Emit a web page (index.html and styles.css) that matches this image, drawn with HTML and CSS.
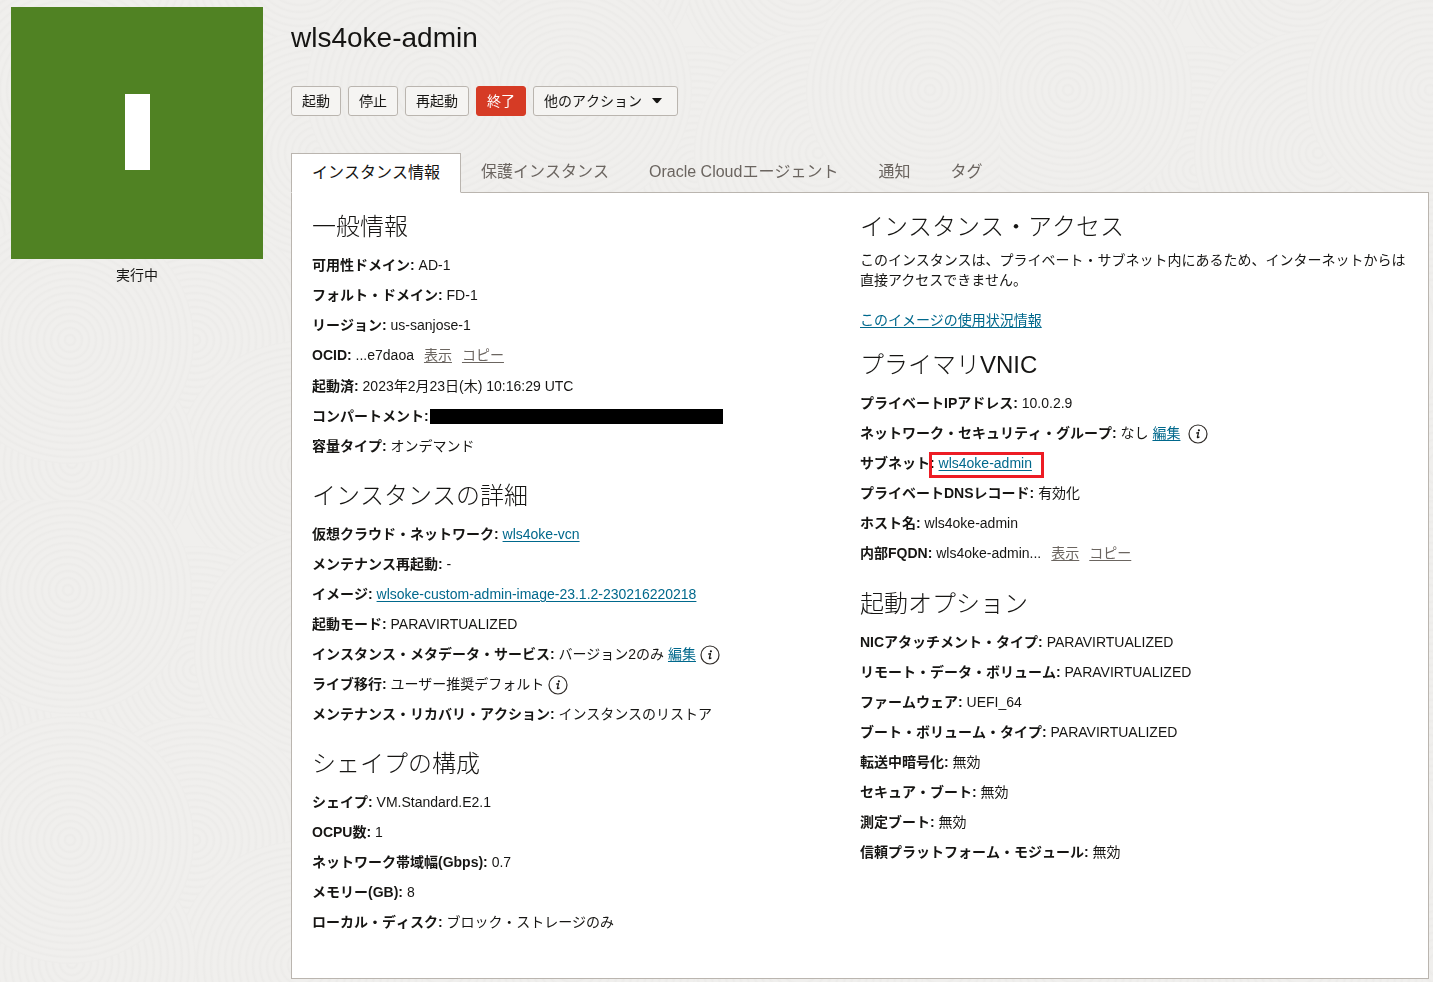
FILE: index.html
```html
<!DOCTYPE html>
<html lang="ja">
<head>
<meta charset="utf-8">
<meta name="viewport" content="width=device-width, initial-scale=1">
<title>wls4oke-admin</title>
<link rel="stylesheet" href="styles.css">
</head>
<body>
<svg class="backdrop" aria-hidden="true">
  <defs>
    <radialGradient id="rings" gradientUnits="userSpaceOnUse" cx="0" cy="0" r="7" spreadMethod="repeat">
      <stop offset="0" stop-color="#f0efed"/>
      <stop offset="0.4" stop-color="#f0efed"/>
      <stop offset="0.75" stop-color="#ecebe9"/>
      <stop offset="1" stop-color="#f0efed"/>
    </radialGradient>
    <circle id="disc" r="124" fill="url(#rings)"/>
    <g id="discs">
      <use href="#disc" x="440" y="465"/>
      <use href="#disc" x="430" y="240"/>
      <use href="#disc" x="320" y="340"/>
      <use href="#disc" x="195" y="170"/>
      <use href="#disc" x="318" y="153"/>
      <use href="#disc" x="430" y="90"/>
      <use href="#disc" x="195" y="340"/>
      <use href="#disc" x="300" y="465"/>
      <use href="#disc" x="68" y="90"/>
      <use href="#disc" x="72" y="463"/>
      <use href="#disc" x="70" y="340"/>
    </g>
    <pattern id="swirl" width="500" height="500" patternUnits="userSpaceOnUse">
      <rect width="500" height="500" fill="#f0efed"/>
      <use href="#discs" x="-500" y="-500"/>
      <use href="#discs" x="0" y="-500"/>
      <use href="#discs" x="500" y="-500"/>
      <use href="#discs" x="-500" y="0"/>
      <use href="#discs" x="500" y="0"/>
      <use href="#discs" x="0" y="500"/>
      <use href="#discs"/>
    </pattern>
    <symbol id="info" viewBox="0 0 20 20">
      <circle cx="10" cy="10" r="9" fill="none" stroke="#312d2a" stroke-width="1.2"/>
      <circle cx="10.9" cy="6.3" r="1.1" fill="#161513"/>
      <path d="M8.2 9.2 10.5 8.7 9.4 13.2Q9.2 14.4 11.4 12.8" fill="none" stroke="#161513" stroke-width="1.3" stroke-linejoin="round"/>
    </symbol>
  </defs>
  <rect width="100%" height="100%" fill="url(#swirl)"/>
</svg>

<div class="page">
  <aside class="status">
    <div class="status-tile">
      <svg class="status-mark" viewBox="0 0 25 76" aria-hidden="true"><rect width="25" height="76" fill="#fff"/></svg>
    </div>
    <p class="status-text">実行中</p>
  </aside>

  <main class="main">
    <h1 class="title">wls4oke-admin</h1>
    <div class="actions">
      <button class="btn" type="button">起動</button>
      <button class="btn" type="button">停止</button>
      <button class="btn" type="button">再起動</button>
      <button class="btn btn-danger" type="button">終了</button>
      <button class="btn btn-menu" type="button">他のアクション<svg class="caret" viewBox="0 0 10 6" aria-hidden="true"><path d="M0 0H10L6 4.8Q5 5.6 4 4.8Z" fill="#161513"/></svg></button>
    </div>

    <div class="tabs" role="tablist">
      <button class="tab tab-active" type="button" role="tab" aria-selected="true">インスタンス情報</button>
      <button class="tab" type="button" role="tab" aria-selected="false">保護インスタンス</button>
      <button class="tab" type="button" role="tab" aria-selected="false">Oracle Cloudエージェント</button>
      <button class="tab" type="button" role="tab" aria-selected="false">通知</button>
      <button class="tab" type="button" role="tab" aria-selected="false">タグ</button>
    </div>

    <div class="panel" role="tabpanel">
      <div class="column">
        <section>
          <h2 class="heading">一般情報</h2>
          <dl class="fields">
            <div class="field"><dt>可用性ドメイン:</dt> <dd>AD-1</dd></div>
            <div class="field"><dt>フォルト・ドメイン:</dt> <dd>FD-1</dd></div>
            <div class="field"><dt>リージョン:</dt> <dd>us-sanjose-1</dd></div>
            <div class="field field-id"><dt>OCID:</dt> <dd>...e7daoa<a class="quiet" href="#">表示</a><a class="quiet" href="#">コピー</a></dd></div>
            <div class="field"><dt>起動済:</dt> <dd>2023年2月23日(木) 10:16:29 UTC</dd></div>
            <div class="field field-masked"><dt>コンパートメント:</dt><dd class="mask"></dd></div>
            <div class="field"><dt>容量タイプ:</dt> <dd>オンデマンド</dd></div>
          </dl>
        </section>
        <section>
          <h2 class="heading">インスタンスの詳細</h2>
          <dl class="fields">
            <div class="field"><dt>仮想クラウド・ネットワーク:</dt> <dd><a href="#">wls4oke-vcn</a></dd></div>
            <div class="field"><dt>メンテナンス再起動:</dt> <dd>-</dd></div>
            <div class="field"><dt>イメージ:</dt> <dd><a href="#">wlsoke-custom-admin-image-23.1.2-230216220218</a></dd></div>
            <div class="field"><dt>起動モード:</dt> <dd>PARAVIRTUALIZED</dd></div>
            <div class="field"><dt>インスタンス・メタデータ・サービス:</dt> <dd>バージョン2のみ <a href="#">編集</a> <button class="info" type="button" aria-label="情報"><svg viewBox="0 0 20 20"><use href="#info"/></svg></button></dd></div>
            <div class="field"><dt>ライブ移行:</dt> <dd>ユーザー推奨デフォルト <button class="info" type="button" aria-label="情報"><svg viewBox="0 0 20 20"><use href="#info"/></svg></button></dd></div>
            <div class="field"><dt>メンテナンス・リカバリ・アクション:</dt> <dd>インスタンスのリストア</dd></div>
          </dl>
        </section>
        <section>
          <h2 class="heading">シェイプの構成</h2>
          <dl class="fields">
            <div class="field"><dt>シェイプ:</dt> <dd>VM.Standard.E2.1</dd></div>
            <div class="field"><dt>OCPU数:</dt> <dd>1</dd></div>
            <div class="field"><dt>ネットワーク帯域幅(Gbps):</dt> <dd>0.7</dd></div>
            <div class="field"><dt>メモリー(GB):</dt> <dd>8</dd></div>
            <div class="field"><dt>ローカル・ディスク:</dt> <dd>ブロック・ストレージのみ</dd></div>
          </dl>
        </section>
      </div>

      <div class="column">
        <section class="access">
          <h2 class="heading">インスタンス・アクセス</h2>
          <p class="note">このインスタンスは、プライベート・サブネット内にあるため、インターネットからは直接アクセスできません。</p>
          <p class="note"><a href="#">このイメージの使用状況情報</a></p>
        </section>
        <section>
          <h2 class="heading">プライマリVNIC</h2>
          <dl class="fields">
            <div class="field"><dt>プライベートIPアドレス:</dt> <dd>10.0.2.9</dd></div>
            <div class="field"><dt>ネットワーク・セキュリティ・グループ:</dt> <dd>なし <a href="#">編集</a> <button class="info info-spaced" type="button" aria-label="情報"><svg viewBox="0 0 20 20"><use href="#info"/></svg></button></dd></div>
            <div class="field"><dt>サブネット:</dt> <dd class="marked"><a href="#">wls4oke-admin</a></dd></div>
            <div class="field"><dt>プライベートDNSレコード:</dt> <dd>有効化</dd></div>
            <div class="field"><dt>ホスト名:</dt> <dd>wls4oke-admin</dd></div>
            <div class="field field-id"><dt>内部FQDN:</dt> <dd>wls4oke-admin...<a class="quiet" href="#">表示</a><a class="quiet" href="#">コピー</a></dd></div>
          </dl>
        </section>
        <section>
          <h2 class="heading">起動オプション</h2>
          <dl class="fields">
            <div class="field"><dt>NICアタッチメント・タイプ:</dt> <dd>PARAVIRTUALIZED</dd></div>
            <div class="field"><dt>リモート・データ・ボリューム:</dt> <dd>PARAVIRTUALIZED</dd></div>
            <div class="field"><dt>ファームウェア:</dt> <dd>UEFI_64</dd></div>
            <div class="field"><dt>ブート・ボリューム・タイプ:</dt> <dd>PARAVIRTUALIZED</dd></div>
            <div class="field"><dt>転送中暗号化:</dt> <dd>無効</dd></div>
            <div class="field"><dt>セキュア・ブート:</dt> <dd>無効</dd></div>
            <div class="field"><dt>測定ブート:</dt> <dd>無効</dd></div>
            <div class="field"><dt>信頼プラットフォーム・モジュール:</dt> <dd>無効</dd></div>
          </dl>
        </section>
      </div>
    </div>
  </main>
</div>
</body>
</html>
```
FILE: styles.css
```css
* {
  box-sizing: border-box;
}

body {
  margin: 0;
  background: #f0efed;
  color: #161513;
  font-family: "Liberation Sans", "Noto Sans CJK JP", sans-serif;
  font-size: 14px;
  line-height: 20px;
}

button {
  font: inherit;
  color: inherit;
}

h1,
h2,
p,
dl,
dd {
  margin: 0;
}

a {
  color: #00688c;
  text-underline-offset: 2px;
}

.backdrop {
  position: fixed;
  inset: 0;
  z-index: -1;
  width: 100%;
  height: 100%;
}

.page {
  display: flex;
  align-items: flex-start;
  gap: 28px;
  padding: 7px 4px 3px 11px;
}

.status {
  flex: 0 0 252px;
  text-align: center;
}

.status-tile {
  display: flex;
  align-items: center;
  justify-content: center;
  aspect-ratio: 1;
  padding-bottom: 2px;
  background: #508223;
}

.status-mark {
  width: 25px;
  height: 76px;
}

.status-text {
  padding-top: 6px;
}

.main {
  flex: 1;
  min-width: 0;
}

.title {
  padding-top: 15px;
  font-size: 28px;
  font-weight: 400;
  line-height: 32px;
}

.actions {
  display: flex;
  flex-wrap: wrap;
  gap: 7px;
  padding: 32px 0 37px;
}

.btn {
  height: 30px;
  padding: 0 10px;
  border: 1px solid #bab5af;
  border-radius: 3px;
  background: #f5f4f2;
  line-height: 20px;
  font-kerning: none;
}

.btn-danger {
  border-color: #d63b25;
  background: #d63b25;
  color: #fff;
}

.btn-menu {
  display: flex;
  align-items: center;
  gap: 10px;
  padding-right: 15px;
}

.caret {
  width: 10px;
  height: 6px;
}

.tabs {
  display: flex;
  margin-bottom: -1px;
}

.tab {
  height: 40px;
  padding: 0 20px 2px;
  border: 0;
  background: none;
  color: #6b6560;
  font-size: 16px;
  line-height: 24px;
  font-kerning: none;
}

.tab-active {
  position: relative;
  padding-bottom: 0;
  border: 1px solid #bab5af;
  border-bottom-color: #fff;
  background: #fff;
  color: #161513;
}

.panel {
  display: grid;
  grid-template-columns: 1fr 1fr;
  padding: 20px 20px 46px;
  border: 1px solid #bab5af;
  background: #fff;
}

.column {
  display: flex;
  flex-direction: column;
  gap: 26px;
}

.heading {
  margin-bottom: 14px;
  font-size: 24px;
  font-weight: 300;
  line-height: 28px;
  font-kerning: none;
}

.fields {
  display: flex;
  flex-direction: column;
  gap: 10px;
}

.field {
  height: 20px;
  white-space: nowrap;
}

.field dt,
.field dd {
  display: inline;
}

.field dt {
  font-weight: 700;
  font-kerning: none;
}

.field-id {
  height: 21px;
}

.quiet {
  margin-left: 10px;
  color: #6b6560;
}

.field-masked {
  display: flex;
  align-items: center;
  gap: 1px;
}

.field .mask {
  display: block;
  width: 293px;
  height: 15px;
  background: #000;
}

.info {
  width: 20px;
  height: 21px;
  padding: 1px 0 0;
  border: 0;
  background: none;
  vertical-align: top;
}

.info svg {
  display: block;
  width: 20px;
  height: 20px;
}

.info-spaced {
  margin-left: 4px;
}

.field .marked {
  display: inline-block;
  position: relative;
}

.marked::after {
  content: "";
  position: absolute;
  inset: -1px -12px -5px -10px;
  border: 3px solid #ed1c24;
  pointer-events: none;
}

.access .heading {
  margin-bottom: 9px;
}

.note + .note {
  margin-top: 20px;
}

.access {
  margin-bottom: -5px;
}
```
